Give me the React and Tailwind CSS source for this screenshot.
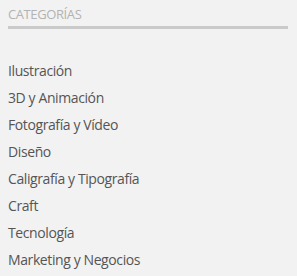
const categories = [
  'Ilustración',
  '3D y Animación',
  'Fotografía y Vídeo',
  'Diseño',
  'Caligrafía y Tipografía',
  'Craft',
  'Tecnología',
  'Marketing y Negocios',
];

export default function App() {
  return (
    <div className="w-[297px] h-[276px] bg-[#f2f2f2] px-2 pt-[6px] font-['Open_Sans',sans-serif]">
      <h3 className="text-[13px] leading-[16px] text-[#b3b3b3] uppercase tracking-[-0.4px]">Categorías</h3>
      <div className="mt-[4px] h-[3px] w-[280px] bg-[#cacaca]" />
      <ul className="mt-[28px]">
        {categories.map((c) => (
          <li key={c} className="text-[14px] leading-[27px] text-[#555] tracking-[-0.4px]">
            {c}
          </li>
        ))}
      </ul>
    </div>
  );
}
